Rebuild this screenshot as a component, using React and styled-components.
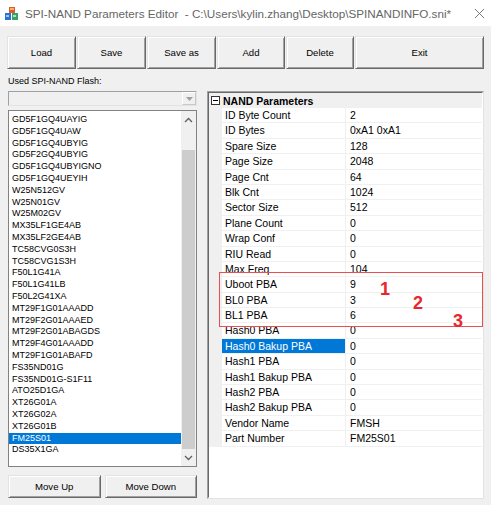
import React from 'react'
import styled, { createGlobalStyle } from 'styled-components'

const FLASH_LIST = [
  'GD5F1GQ4UAYIG',
  'GD5F1GQ4UAW',
  'GD5F1GQ4UBYIG',
  'GD5F2GQ4UBYIG',
  'GD5F1GQ4UBYIGNO',
  'GD5F1GQ4UEYIH',
  'W25N512GV',
  'W25N01GV',
  'W25M02GV',
  'MX35LF1GE4AB',
  'MX35LF2GE4AB',
  'TC58CVG0S3H',
  'TC58CVG1S3H',
  'F50L1G41A',
  'F50L1G41LB',
  'F50L2G41XA',
  'MT29F1G01AAADD',
  'MT29F2G01AAAED',
  'MT29F2G01ABAGDS',
  'MT29F4G01AAADD',
  'MT29F1G01ABAFD',
  'FS35ND01G',
  'FS35ND01G-S1F11',
  'ATO25D1GA',
  'XT26G01A',
  'XT26G02A',
  'XT26G01B',
  'FM25S01',
  'DS35X1GA'
]

const PARAMS = [
  ['ID Byte Count', '2'],
  ['ID Bytes', '0xA1 0xA1'],
  ['Spare Size', '128'],
  ['Page Size', '2048'],
  ['Page Cnt', '64'],
  ['Blk Cnt', '1024'],
  ['Sector Size', '512'],
  ['Plane Count', '0'],
  ['Wrap Conf', '0'],
  ['RIU Read', '0'],
  ['Max Freq', '104'],
  ['Uboot PBA', '9'],
  ['BL0 PBA', '3'],
  ['BL1 PBA', '6'],
  ['Hash0 PBA', '0'],
  ['Hash0 Bakup PBA', '0'],
  ['Hash1 PBA', '0'],
  ['Hash1 Bakup PBA', '0'],
  ['Hash2 PBA', '0'],
  ['Hash2 Bakup PBA', '0'],
  ['Vendor Name', 'FMSH'],
  ['Part Number', 'FM25S01']
]

const TOOL_BUTTONS = [
  { label: 'Load', width: 69 },
  { label: 'Save', width: 69 },
  { label: 'Save as', width: 69 },
  { label: 'Add', width: 68 },
  { label: 'Delete', width: 68 },
  { label: 'Exit' }
]

const NOTES = [
  { text: '1', left: 172, top: 188 },
  { text: '2', left: 205, top: 202 },
  { text: '3', left: 245, top: 220 }
]

const App = () => {
  const selectedFlash = 'FM25S01'
  const selectedParam = 'Hash0 Bakup PBA'

  return (
    <Window>
      <GlobalStyle />
      <TitleBar>
        <AppIcon viewBox="0 0 13 13">
          <rect x="4" y="0" width="6" height="6" fill="#e2592c" />
          <rect x="5" y="1" width="4" height="2" fill="#f6b26b" />
          <rect x="0" y="6" width="6" height="7" fill="#2f6fd0" />
          <rect x="7" y="6" width="6" height="7" fill="#3aa06b" />
          <rect x="1" y="8" width="3" height="2" fill="#9fc3f5" />
          <rect x="8" y="8" width="3" height="2" fill="#a6e0bf" />
        </AppIcon>
        <TitleText>
          SPI-NAND Parameters Editor&nbsp; - C:\Users\kylin.zhang\Desktop\SPINANDINFO.sni*
        </TitleText>
        <CloseIcon viewBox="0 0 12 12">
          <path d="M1 1L11 11M11 1L1 11" />
        </CloseIcon>
      </TitleBar>

      <Toolbar>
        {TOOL_BUTTONS.map(b => (
          <ToolButton key={b.label} $width={b.width}>
            {b.label}
          </ToolButton>
        ))}
      </Toolbar>

      <Main>
        <FieldLabel>Used SPI-NAND Flash:</FieldLabel>
        <span />
        <LeftColumn>
          <Combo>
            <ComboArrow>
              <svg width="7" height="4" viewBox="0 0 7 4">
                <path d="M0 0H7L3.5 4Z" fill="#a0a0a0" />
              </svg>
            </ComboArrow>
          </Combo>

          <ListBox>
            <ListItems>
              {FLASH_LIST.map(name => (
                <ListItem key={name} $selected={name === selectedFlash}>
                  {name}
                </ListItem>
              ))}
            </ListItems>
            <ScrollBar>
              <ScrollArrow>
                <svg width="9" height="6" viewBox="0 0 9 6">
                  <path d="M1 5L4.5 1.5L8 5" />
                </svg>
              </ScrollArrow>
              <ScrollTrack>
                <ScrollThumb />
              </ScrollTrack>
              <ScrollArrow>
                <svg width="9" height="6" viewBox="0 0 9 6">
                  <path d="M1 1L4.5 4.5L8 1" />
                </svg>
              </ScrollArrow>
            </ScrollBar>
          </ListBox>

          <MoveRow>
            <ToolButton $height={23}>Move Up</ToolButton>
            <ToolButton $height={23}>Move Down</ToolButton>
          </MoveRow>
        </LeftColumn>

        <GridFrame>
          <GridBody>
            <CategoryRow>
              <ExpandBox viewBox="0 0 9 9">
                <rect x="0.5" y="0.5" width="8" height="8" fill="#fff" stroke="#333" />
                <path d="M2 4.5H7" stroke="#000" />
              </ExpandBox>
              <CategoryTitle>NAND Parameters</CategoryTitle>
            </CategoryRow>
            {PARAMS.map(([name, value]) => (
              <PropRow key={name}>
                <Gutter />
                <PropName $selected={name === selectedParam}>{name}</PropName>
                <PropValue>{value}</PropValue>
              </PropRow>
            ))}
          </GridBody>

          <NoteBox />
          {NOTES.map(n => (
            <NoteNumber key={n.text} style={{ left: n.left, top: n.top }}>
              {n.text}
            </NoteNumber>
          ))}
        </GridFrame>
      </Main>
    </Window>
  )
}

const GlobalStyle = createGlobalStyle`
  html, body {
    margin: 0;
    padding: 0;
    background: #f0f0f0;
  }
  body {
    font-family: "Liberation Sans", Arial, sans-serif;
    color: #000;
  }
`

const Window = styled.div`
  width: 491px;
  height: 505px;
  overflow: hidden;
  background: #f0f0f0;
  display: flex;
  flex-direction: column;
`

const TitleBar = styled.div`
  height: 26px;
  flex-shrink: 0;
  background: #fff;
  display: flex;
  align-items: center;
  padding: 0 5px;
  box-sizing: border-box;
`

const AppIcon = styled.svg`
  width: 13px;
  height: 13px;
  flex-shrink: 0;
  margin-right: 7px;
`

const TitleText = styled.div`
  flex: 1;
  font-size: 11.7px;
  color: #666;
  white-space: nowrap;
  overflow: hidden;
`

const CloseIcon = styled.svg`
  width: 11px;
  height: 11px;
  margin-right: 1px;
  flex-shrink: 0;
  path {
    stroke: #707070;
    stroke-width: 1;
    fill: none;
  }
`

const Toolbar = styled.div`
  display: flex;
  gap: 1px;
  padding: 10px 7px 0 7px;
`

const ToolButton = styled.button`
  box-sizing: border-box;
  height: ${p => p.$height || 33}px;
  width: ${p => (p.$width ? `${p.$width}px` : 'auto')};
  flex: ${p => (p.$width ? 'none' : '1')};
  padding: 0;
  margin: 0;
  background: #f0f0f0;
  font-family: "Liberation Sans", Arial, sans-serif;
  font-size: 9.6px;
  color: #000;
  border: 1px solid;
  border-color: #e3e3e3 #696969 #696969 #e3e3e3;
  box-shadow: inset 1px 1px #fff, inset -1px -1px #a0a0a0;
`

const Main = styled.div`
  display: grid;
  grid-template-columns: 189px 277px;
  column-gap: 10px;
  padding: 6px 0 0 8px;
`

const FieldLabel = styled.div`
  font-size: 9px;
  line-height: 12px;
  margin-bottom: 4px;
  white-space: nowrap;
`

const LeftColumn = styled.div`
  display: flex;
  flex-direction: column;
`

const Combo = styled.div`
  box-sizing: border-box;
  height: 15px;
  border: 1px solid;
  border-color: #a0a0a0 #e3e3e3 #e3e3e3 #a0a0a0;
  background: #f0f0f0;
  display: flex;
  justify-content: flex-end;
`

const ComboArrow = styled.div`
  box-sizing: border-box;
  width: 14px;
  height: 13px;
  border: 1px solid;
  border-color: #fff #c8c8c8 #c8c8c8 #fff;
  display: flex;
  align-items: center;
  justify-content: center;
`

const ListBox = styled.div`
  box-sizing: border-box;
  margin-top: 4px;
  height: 357px;
  border: 1px solid #828282;
  background: #fff;
  display: flex;
  overflow: hidden;
`

const ListItems = styled.div`
  flex: 1;
  padding-top: 3px;
`

const ListItem = styled.div`
  height: 11.8px;
  line-height: 11.8px;
  padding-left: 3px;
  font-size: 9px;
  white-space: nowrap;
  background: ${p => (p.$selected ? '#0078d7' : 'transparent')};
  color: ${p => (p.$selected ? '#fff' : '#000')};
`

const ScrollBar = styled.div`
  width: 15px;
  background: #f0f0f0;
  display: flex;
  flex-direction: column;
`

const ScrollArrow = styled.div`
  height: 17px;
  display: flex;
  align-items: center;
  justify-content: center;
  svg path {
    fill: none;
    stroke: #606060;
    stroke-width: 1.3;
  }
`

const ScrollTrack = styled.div`
  flex: 1;
  padding: 22px 1px 0 1px;
  display: flex;
  flex-direction: column;
`

const ScrollThumb = styled.div`
  flex: 1;
  background: #cdcdcd;
`

const MoveRow = styled.div`
  margin-top: 8px;
  display: flex;
  gap: 4px;
  & > button {
    flex: 1;
  }
`

const GridFrame = styled.div`
  position: relative;
  box-sizing: border-box;
  height: 408px;
  border: 1px solid;
  border-color: #a0a0a0 #e3e3e3 #e3e3e3 #a0a0a0;
`

const GridBody = styled.div`
  box-sizing: border-box;
  height: 100%;
  border: 1px solid;
  border-color: #696969 #fff #fff #696969;
  background: #fff;
  display: flex;
  flex-direction: column;
  font-size: 10.5px;
`

const CategoryRow = styled.div`
  height: 15px;
  flex-shrink: 0;
  background: #f0f0f0;
  display: flex;
  align-items: center;
`

const ExpandBox = styled.svg`
  width: 9px;
  height: 9px;
  margin: 0 3px 0 2px;
`

const CategoryTitle = styled.span`
  font-weight: bold;
`

const PropRow = styled.div`
  height: 15.4px;
  flex-shrink: 0;
  display: grid;
  grid-template-columns: 13px 124px 1fr;
  line-height: 14.4px;
  white-space: nowrap;
`

const Gutter = styled.div`
  background: #f0f0f0;
`

const PropName = styled.div`
  padding-left: 3px;
  border-bottom: 1px solid #f0f0f0;
  border-right: 1px solid #f0f0f0;
  background: ${p => (p.$selected ? '#0078d7' : '#fff')};
  color: ${p => (p.$selected ? '#fff' : '#000')};
`

const PropValue = styled.div`
  padding-left: 4px;
  border-bottom: 1px solid #f0f0f0;
`

const NoteBox = styled.div`
  position: absolute;
  left: 11px;
  top: 180px;
  width: 264px;
  height: 55px;
  box-sizing: border-box;
  border: 1px solid #e85050;
  pointer-events: none;
`

const NoteNumber = styled.div`
  position: absolute;
  font-family: "Liberation Sans", Arial, sans-serif;
  font-weight: bold;
  font-size: 18px;
  line-height: 18px;
  color: #e8262b;
`

export default App
